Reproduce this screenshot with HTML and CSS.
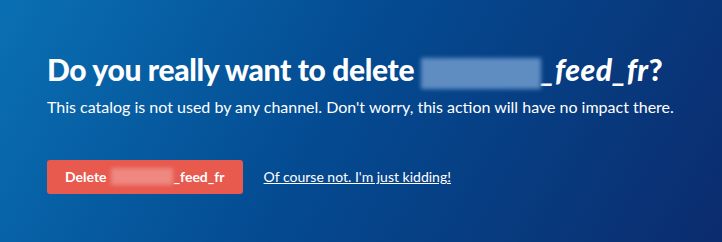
FILE: index.html
```html
<!DOCTYPE html>
<html>
<head>
<meta charset="utf-8">
<link rel="stylesheet" href="styles.css">
</head>
<body>
<main class="page">
  <h1 class="title"><span class="title-lead">Do you really want to delete </span><span class="redacted redacted-title"></span><em>_feed_fr</em>?</h1>
  <p class="subtitle">This catalog is not used by any channel. Don't worry, this action will have no impact there.</p>
  <div class="actions">
    <button class="btn-delete">Delete <span class="redacted redacted-btn"></span>_feed_fr</button>
    <a class="cancel" href="#">Of course not. I'm just kidding!</a>
  </div>
</main>
</body>
</html>
```
FILE: styles.css
```css
html, body {
  margin: 0;
  padding: 0;
  height: 100%;
}
body {
  background: linear-gradient(120deg, #0a70b3 0%, #044b92 45%, #0b2c6e 100%);
  font-family: Lato, "Open Sans", sans-serif;
  color: #fff;
  overflow: hidden;
}
.page {
  padding: 51px 47px 0;
}
.title {
  margin: 0;
  font-size: 30px;
  font-weight: 900;
  line-height: 36px;
  white-space: nowrap;
}
.title-lead {
  letter-spacing: -0.35px;
}
.title em {
  font-style: italic;
  letter-spacing: 0.6px;
}
.redacted {
  display: inline-block;
  vertical-align: middle;
  filter: blur(2px);
}
.redacted-title {
  width: 120px;
  height: 31px;
  background: #5f8dc2;
}
.subtitle {
  margin: 8px 0 0;
  font-size: 16px;
  line-height: 20px;
}
.actions {
  display: flex;
  align-items: center;
  gap: 21px;
  margin-top: 43px;
}
.btn-delete {
  font-family: Lato, sans-serif;
  font-weight: 700;
  font-size: 14px;
  color: #fff;
  background: #e8594e;
  border: none;
  border-radius: 3px;
  height: 34px;
  padding: 0 18px;
  display: flex;
  align-items: center;
}
.redacted-btn {
  width: 62px;
  height: 17px;
  background: #ee8880;
  margin: 0 1px 0 4px;
}
.cancel {
  color: #fff;
  font-size: 14px;
  text-decoration: underline;
}
```
